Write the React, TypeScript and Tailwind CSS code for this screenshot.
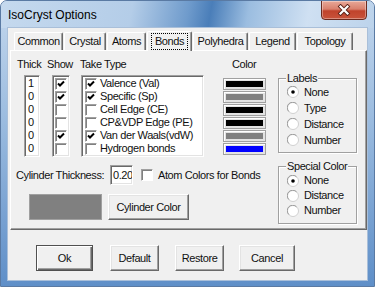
import React from "react"

const sunken =
  "border border-t-[#a0a0a0] border-l-[#a0a0a0] border-b-white border-r-white bg-white shadow-[inset_1px_1px_0_#696969,inset_-1px_-1px_0_#e3e3e3]"
const raised =
  "border border-t-white border-l-white border-b-[#696969] border-r-[#696969] bg-[#f0f0f0] shadow-[inset_-1px_-1px_0_#a0a0a0,inset_1px_1px_0_#e3e3e3]"

const tabs = [
  { label: "Common", w: "w-[49px]" },
  { label: "Crystal", w: "w-[42px]" },
  { label: "Atoms", w: "w-[39px]" },
  { label: "Bonds", w: "w-[45px]", active: true },
  { label: "Polyhedra", w: "w-[55px]" },
  { label: "Legend", w: "w-[47px]" },
  { label: "Topology", w: "w-[56px]" },
]

const bonds = [
  { thick: "1", show: true, take: true, name: "Valence (Val)", color: "bg-black" },
  { thick: "0", show: true, take: true, name: "Specific (Sp)", color: "bg-[#808080]" },
  { thick: "0", show: false, take: false, name: "Cell Edge (CE)", color: "bg-black" },
  { thick: "0", show: false, take: false, name: "CP&VDP Edge (PE)", color: "bg-black" },
  { thick: "0", show: true, take: true, name: "Van der Waals(vdW)", color: "bg-[#808080]" },
  { thick: "0", show: false, take: false, name: "Hydrogen bonds", color: "bg-[#0000ff]" },
]

function Check({ on }: { on?: boolean }) {
  return (
    <span className="flex h-[12px] w-[12px] shrink-0 items-center justify-center border border-t-[#a0a0a0] border-l-[#a0a0a0] border-b-white border-r-white bg-white shadow-[inset_1px_1px_0_#808080]">
      {on && (
        <svg width="8" height="8" viewBox="0 0 8 8">
          <path d="M1 3.5 L3 5.5 L7 1.5" fill="none" stroke="#000" strokeWidth="2" />
        </svg>
      )}
    </span>
  )
}

function Radio({ on, label }: { on?: boolean; label: string }) {
  return (
    <div className="flex h-[16px] items-center">
      <svg width="12" height="12" viewBox="0 0 12 12" className="shrink-0">
        <circle cx="6" cy="6" r="5.5" fill="#fff" stroke="#d0d0d0" />
        <path d="M1.8 9.5 A5 5 0 0 1 9.5 1.8" fill="none" stroke="#9a9a9a" />
        {on && <circle cx="6" cy="6" r="1.8" fill="#000" />}
      </svg>
      <span className="ml-[5px]">{label}</span>
    </div>
  )
}

function Group({ title, className, children }: { title: string; className: string; children: React.ReactNode }) {
  return (
    <div className={`relative border border-[#a0a0a0] shadow-[inset_1px_1px_0_white,1px_1px_0_white] pl-[8px] ${className}`}>
      <span className="absolute -top-[7px] left-[7px] bg-[#f0f0f0] px-px leading-[13px]">{title}</span>
      {children}
    </div>
  )
}

export default function App() {
  return (
    <div className="relative h-[287px] w-[375px] overflow-hidden rounded-t-[7px] border border-[#5a7aa3] bg-[linear-gradient(180deg,#c3d7ed_0%,#9dbde0_40%,#5f8fc8_100%)] font-['Liberation_Sans',Arial,sans-serif] text-[11px] tracking-[-0.4px] text-[#111]">
      {/* title bar */}
      <div className="flex h-[27px] items-start justify-between bg-[linear-gradient(100deg,#c5d9ee_0%,#b4cde8_35%,#6f9bcc_50%,#4a7eb9_56%,#9bbde0_66%,#cfe0f2_82%,#bcd3eb_100%)]">
        <span className="ml-[7px] mt-[6px] text-[12px] leading-[16px] tracking-normal text-black">IsoCryst Options</span>
        <div className="-mt-px mr-[7px] flex h-[20px] w-[46px] items-center justify-center rounded-b-[4px] border border-[#6b2a1f] bg-[linear-gradient(180deg,#e8a898_0%,#d9806d_45%,#c0432c_55%,#c8533b_100%)] shadow-[inset_0_0_0_1px_rgba(255,255,255,0.35)]">
          <svg width="14" height="12" viewBox="0 0 14 12">
            <path d="M3.5 2.5 L10.5 9.5 M10.5 2.5 L3.5 9.5" stroke="#5a2218" strokeWidth="4" strokeLinecap="square" />
            <path d="M3.5 2.5 L10.5 9.5 M10.5 2.5 L3.5 9.5" stroke="#fff" strokeWidth="2.2" strokeLinecap="square" />
          </svg>
        </div>
      </div>

      {/* client area */}
      <div className="ml-[7px] h-[252px] w-[359px] bg-[#f0f0f0] pt-[3px] shadow-[0_0_0_1px_#a9bfd9]">
        {/* tabs */}
        <div className="ml-[6px] flex h-[19px] items-end gap-px">
          {tabs.map((t) =>
            t.active ? (
              <div
                key={t.label}
                className={`relative z-10 -mb-px flex h-[20px] ${t.w} items-center justify-center rounded-t-[2px] border-l border-t border-l-white border-t-white border-r border-r-[#696969] bg-[#f0f0f0] shadow-[inset_-1px_0_0_#a0a0a0]`}
              >
                <span className="border border-dotted border-black px-[3px] leading-[15px]">{t.label}</span>
              </div>
            ) : (
              <div
                key={t.label}
                className={`flex h-[18px] ${t.w} items-center justify-center rounded-t-[2px] border-l border-t border-l-white border-t-white border-r border-r-[#696969] bg-[#f0f0f0] shadow-[inset_-1px_0_0_#a0a0a0]`}
              >
                {t.label}
              </div>
            )
          )}
        </div>

        {/* panel */}
        <div className="ml-[2px] flex h-[180px] w-[357px] border border-t-white border-l-white border-b-[#696969] border-r-[#696969] shadow-[inset_-1px_-1px_0_#a0a0a0]">
          <div className="w-[267px] pl-[5px] pt-[7px]">
            <div className="flex h-[13px] pl-px leading-[13px]">
              <span className="w-[30px]">Thick</span>
              <span className="w-[33px]">Show</span>
              <span className="w-[152px]">Take Type</span>
              <span>Color</span>
            </div>

            <div className="mt-[4px] flex h-[82px]">
              <div className={`ml-[8px] w-[16px] py-px pl-[3px] ${sunken}`}>
                {bonds.map((b, i) => (
                  <div key={i} className="h-[13px] leading-[13px]">
                    {b.thick}
                  </div>
                ))}
              </div>
              <div className={`ml-[12px] w-[18px] py-px pl-[2px] ${sunken}`}>
                {bonds.map((b, i) => (
                  <div key={i} className="flex h-[13px] items-center">
                    <Check on={b.show} />
                  </div>
                ))}
              </div>
              <div className={`ml-[11px] w-[123px] py-px pl-[3px] ${sunken}`}>
                {bonds.map((b, i) => (
                  <div key={i} className="flex h-[13px] items-center">
                    <Check on={b.take} />
                    <span className="ml-[3px] whitespace-nowrap leading-[13px]">{b.name}</span>
                  </div>
                ))}
              </div>
              <div className="ml-[19px] pt-[3px]">
                {bonds.map((b, i) => (
                  <div key={i} className="mb-px h-[12px] w-[43px] border border-[#a0a0a0] bg-[#e3e3e3] p-[2px] shadow-[inset_1px_1px_0_white]">
                    <div className={`h-full w-full ${b.color}`} />
                  </div>
                ))}
              </div>
            </div>

            <div className="mt-[8px] flex h-[20px] items-center">
              <span className="w-[94px] whitespace-nowrap">Cylinder Thickness:</span>
              <div className={`flex h-[20px] w-[23px] items-center overflow-hidden pl-[2px] ${sunken}`}>
                <span className="whitespace-nowrap">0.20</span>
              </div>
              <span className="ml-[8px]">
                <Check />
              </span>
              <span className="ml-[5px] whitespace-nowrap">Atom Colors for Bonds</span>
            </div>

            <div className="mt-[9px] flex h-[26px]">
              <div className="ml-[13px] h-[26px] w-[73px] border border-[#a0a0a0] bg-[#808080]" />
              <button className={`ml-[6px] h-[26px] w-[81px] ${raised}`}>Cylinder Color</button>
            </div>
          </div>

          <div className="w-[79px]">
            <Group title="Labels" className="mt-[27px] h-[75px] pt-[5px]">
              <Radio on label="None" />
              <Radio label="Type" />
              <Radio label="Distance" />
              <Radio label="Number" />
            </Group>
            <Group title="Special Color" className="mt-[13px] h-[58px] pt-[6px]">
              <div className="flex flex-col [&>div]:h-[15px]">
                <Radio on label="None" />
                <Radio label="Distance" />
                <Radio label="Number" />
              </div>
            </Group>
          </div>
        </div>

        {/* buttons */}
        <div className="ml-[28px] mt-[15px] flex h-[26px]">
          <button className="h-[26px] w-[57px] border border-[#505050] bg-[#f0f0f0] shadow-[inset_1px_1px_0_white,inset_-1px_-1px_0_#696969,inset_-2px_-2px_0_#a0a0a0]">
            Ok
          </button>
          <button className={`ml-[17px] h-[26px] w-[49px] ${raised}`}>Default</button>
          <button className={`ml-[16px] h-[26px] w-[49px] ${raised}`}>Restore</button>
          <button className={`ml-[15px] h-[26px] w-[56px] ${raised}`}>Cancel</button>
        </div>
      </div>
    </div>
  )
}
